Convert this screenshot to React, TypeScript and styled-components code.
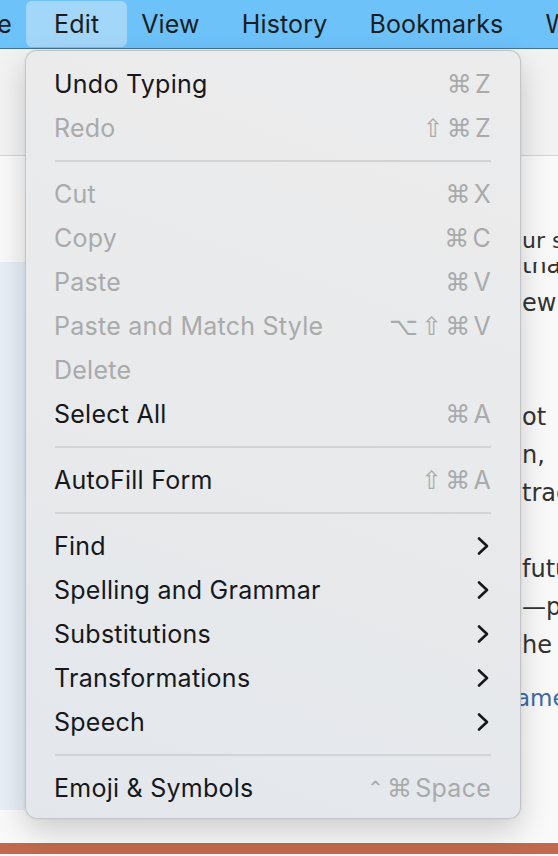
import React from "react";
import styled, { createGlobalStyle } from "styled-components";

const GlobalStyle = createGlobalStyle`
  html, body { margin: 0; padding: 0; }
  body {
    width: 558px;
    height: 856px;
    overflow: hidden;
    background: #f8f8f8;
    font-family: "Inter", "DejaVu Sans", sans-serif;
  }
`;

const Screen = styled.div`
  position: relative;
  width: 558px;
  height: 856px;
  overflow: hidden;
  display: flex;
  flex-direction: column;
`;

const MenuBar = styled.div`
  height: 48px;
  flex: none;
  background: #6dc2f9;
  border-bottom: 1px solid #3f7397;
  display: flex;
  align-items: stretch;
  margin-left: -51px;
`;

const BarItem = styled.div<{ $active?: boolean }>`
  display: flex;
  align-items: center;
  padding: 0 ${(p) => (p.$active ? 28 : 21)}px;
  margin: ${(p) => (p.$active ? "1px -7px 0" : "0")};
  height: ${(p) => (p.$active ? "46px" : "48px")};
  border-radius: 6px;
  background: ${(p) => (p.$active ? "#a3d7fa" : "transparent")};
  font-size: 25px;
  letter-spacing: 0.15px;
  color: #1b1d20;
  white-space: nowrap;
  box-sizing: border-box;
`;

const Toolbar = styled.div`
  height: 106px;
  flex: none;
  background: #f2f2f3;
  border-bottom: 1px solid #d4d4d6;
`;

const Body = styled.div`
  flex: 1;
  display: flex;
  background: #f9f9f9;
`;

const Sidebar = styled.div`
  width: 260px;
  flex: none;
  display: flex;
  flex-direction: column;
  padding-top: 106px;
  padding-bottom: 33px;
  box-sizing: border-box;
`;

const SidebarPanel = styled.div`
  flex: 1;
  background: #e8eef6;
`;

const Main = styled.div`
  flex: 1;
  padding-left: 262px;
  padding-top: 72px;
  color: #333;
  font-family: "DejaVu Sans", sans-serif;
  white-space: nowrap;
`;

const SmallLine = styled.div`
  font-size: 22px;
  line-height: 26px;
  height: 34px;
`;

const ClipLine = styled.div`
  height: 22px;
  overflow: hidden;
`;

const Line = styled.div<{ $gap?: number; $clip?: number }>`
  font-size: 24px;
  line-height: 38px;
  height: 38px;
  margin-top: ${(p) => (p.$gap ?? 0) - (p.$clip ?? 0)}px;
`;

const LinkLine = styled.div`
  font-size: 23px;
  line-height: 38px;
  margin-top: 15px;
  margin-left: -6px;
  color: #3b6ba6;
`;

const Footer = styled.div`
  height: 13px;
  flex: none;
  background: #f6f6f6;
  display: flex;
  flex-direction: column;
`;

const FooterBand = styled.div`
  height: 11px;
  background: #c1694c;
`;

const Menu = styled.div`
  position: absolute;
  left: 25px;
  top: 50px;
  width: 496px;
  box-sizing: border-box;
  padding: 11px 0 8px;
  border-radius: 12px;
  border: 1px solid rgba(0, 0, 0, 0.16);
  background: linear-gradient(200deg, #ececed 0%, #e9eaeb 45%, #e3e7ec 100%);
  box-shadow: 0 12px 30px rgba(0, 0, 0, 0.18), 0 0 2px rgba(0, 0, 0, 0.1);
`;

const Row = styled.div<{ $disabled?: boolean }>`
  height: 44px;
  display: flex;
  align-items: center;
  justify-content: space-between;
  padding: 0 29px 0 28px;
  font-size: 25px;
  letter-spacing: 0.25px;
  color: ${(p) => (p.$disabled ? "#a9aaab" : "#16181b")};
  white-space: nowrap;
`;

const Shortcut = styled.div`
  display: flex;
  align-items: center;
  gap: 3px;
  color: #a9aaab;
  font-size: 25px;
`;

const Glyph = styled.span<{ $small?: boolean }>`
  font-family: "DejaVu Sans", sans-serif;
  font-size: ${(p) => (p.$small ? 20 : 25)}px;
`;

const Separator = styled.div`
  height: 22px;
  display: flex;
  align-items: center;
  padding: 0 29px;
  &::after {
    content: "";
    flex: 1;
    height: 2px;
    background: #d2d3d5;
  }
`;

const Chevron = () => (
  <svg width="14" height="20" viewBox="0 0 14 20" style={{ marginRight: 1 }}>
    <path d="M3 2.5 L11 10 L3 17.5" fill="none" stroke="#16181b" strokeWidth="2.6" strokeLinecap="round" strokeLinejoin="round" />
  </svg>
);

type Item =
  | { sep: true }
  | { label: string; keys?: string[]; disabled?: boolean; submenu?: boolean };

const items: Item[] = [
  { label: "Undo Typing", keys: ["⌘", "Z"] },
  { label: "Redo", keys: ["⇧", "⌘", "Z"], disabled: true },
  { sep: true },
  { label: "Cut", keys: ["⌘", "X"], disabled: true },
  { label: "Copy", keys: ["⌘", "C"], disabled: true },
  { label: "Paste", keys: ["⌘", "V"], disabled: true },
  { label: "Paste and Match Style", keys: ["⌥", "⇧", "⌘", "V"], disabled: true },
  { label: "Delete", disabled: true },
  { label: "Select All", keys: ["⌘", "A"] },
  { sep: true },
  { label: "AutoFill Form", keys: ["⇧", "⌘", "A"] },
  { sep: true },
  { label: "Find", submenu: true },
  { label: "Spelling and Grammar", submenu: true },
  { label: "Substitutions", submenu: true },
  { label: "Transformations", submenu: true },
  { label: "Speech", submenu: true },
  { sep: true },
  { label: "Emoji & Symbols", keys: ["⌃", "⌘", "Space"] },
];

const isSymbol = (k: string) => ["⌘", "⇧", "⌥", "⌃"].includes(k);

export default function App() {
  return (
    <>
      <GlobalStyle />
      <Screen>
        <MenuBar>
          <BarItem>File</BarItem>
          <BarItem $active>Edit</BarItem>
          <BarItem>View</BarItem>
          <BarItem>History</BarItem>
          <BarItem>Bookmarks</BarItem>
          <BarItem>Window</BarItem>
        </MenuBar>
        <Toolbar />
        <Body>
          <Sidebar>
            <SidebarPanel />
          </Sidebar>
          <Main>
            <SmallLine>ur search</SmallLine>
            <ClipLine>
              <Line $clip={16}>that</Line>
            </ClipLine>
            <Line>ew</Line>
            <Line $gap={76}>ot</Line>
            <Line>n,</Line>
            <Line>tract</Line>
            <Line $gap={38}>future</Line>
            <Line>—part</Line>
            <Line>he</Line>
            <LinkLine>ame</LinkLine>
          </Main>
        </Body>
        <Footer>
          <FooterBand />
        </Footer>
        <Menu>
          {items.map((it, i) =>
            "sep" in it ? (
              <Separator key={i} />
            ) : (
              <Row key={i} $disabled={it.disabled}>
                <span>{it.label}</span>
                {it.submenu ? (
                  <Chevron />
                ) : it.keys ? (
                  <Shortcut>
                    {it.keys.map((k, j) =>
                      isSymbol(k) ? (
                        <Glyph key={j} $small={k === "⌃"}>
                          {k}
                        </Glyph>
                      ) : (
                        <span key={j}>{k}</span>
                      )
                    )}
                  </Shortcut>
                ) : null}
              </Row>
            )
          )}
        </Menu>
      </Screen>
    </>
  );
}
